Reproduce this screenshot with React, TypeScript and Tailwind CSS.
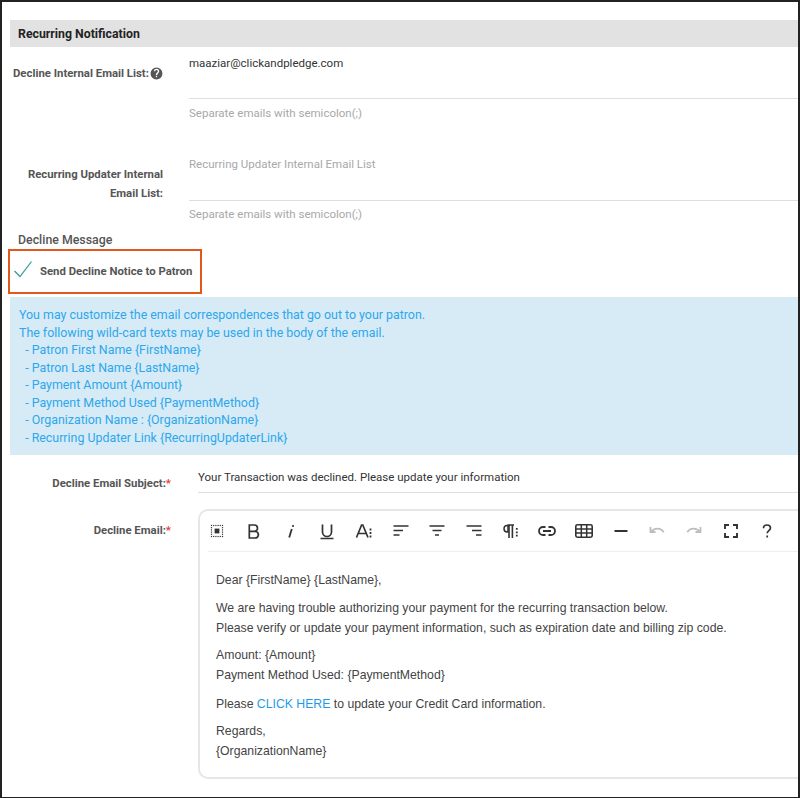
import React from "react";
const Ic = ({ children, c = "#333" }: { children: React.ReactNode; c?: string }) => (
  <div className="w-[36.67px] h-[40px] flex items-center justify-center shrink-0">
    <svg width="24" height="24" viewBox="0 0 24 24" fill="none" stroke={c} strokeWidth="1.6" strokeLinecap="butt">{children}</svg>
  </div>
);

function Toolbar() {
  const dots: [number, number][] = [];
  for (let i = 0; i < 6; i++) {
    const p = 6.5 + i * 2.2;
    dots.push([p, 6.5], [p, 17.5]);
    if (i > 0 && i < 5) dots.push([6.5, p], [17.5, p]);
  }
  return (
    <div className="flex -ml-px">
      <Ic>
        {dots.map(([x, y]) => (
          <rect key={`${x}-${y}`} x={x - 0.6} y={y - 0.6} width="1.2" height="1.2" fill="#333" stroke="none" />
        ))}
        <rect x="9.6" y="9.6" width="4.8" height="4.8" fill="#333" stroke="none" />
      </Ic>
      <Ic>
        <path d="M7.3 6h5a3.2 3.2 0 0 1 0 6.4h-5zM7.3 12.4h5.8a3.3 3.3 0 0 1 0 6.6H7.3z" strokeWidth="1.7" />
      </Ic>
      <Ic>
        <path d="M13.2 7h1.6M12.8 10l-2.6 8.5" strokeWidth="1.8" />
      </Ic>
      <Ic>
        <path d="M7.5 5.5v7.5a4.5 4.5 0 0 0 9 0V5.5M5.5 19.5h13" strokeWidth="1.7" />
      </Ic>
      <Ic>
        <path d="M4.5 18.5 9.6 6h1.2L16 18.5M6.3 14.5h8.4" strokeWidth="1.7" />
        <path d="M18.5 9.5v2M18.5 13v2M18.5 16.5v2" strokeWidth="1.8" />
      </Ic>
      <Ic>
        <path d="M4.5 7h15M4.5 11.5h9.5M4.5 16h6" strokeWidth="1.7" />
      </Ic>
      <Ic>
        <path d="M4.5 7h15M7.5 11.5h9M10 16h4" strokeWidth="1.7" />
      </Ic>
      <Ic>
        <path d="M4.5 7h15M10 11.5h9.5M14 16h5.5" strokeWidth="1.7" />
      </Ic>
      <Ic>
        <path d="M9 6.6H8.2a3.2 3.2 0 0 0 0 6.4H9z" strokeWidth="1.5" />
        <path d="M8.6 6h6.4M10 6v13M13.4 6v13" strokeWidth="1.6" />
        <path d="M17.8 9v1.8M17.8 12.4v1.8M17.8 15.8v1.8" strokeWidth="1.8" />
      </Ic>
      <Ic>
        <path d="M10.5 8H8a4 4 0 0 0 0 8h2.5M13.5 8H16a4 4 0 0 1 0 8h-2.5M8 12h8" strokeWidth="1.8" />
      </Ic>
      <Ic>
        <rect x="3.8" y="5.8" width="16.4" height="12.4" rx="1.6" strokeWidth="1.6" />
        <path d="M3.8 10h16.4M3.8 14h16.4M9.3 5.8v12.4M14.7 5.8v12.4" strokeWidth="1.5" />
      </Ic>
      <Ic>
        <path d="M5.5 12h13" strokeWidth="2" />
      </Ic>
      <Ic c="#bdbdbd">
        <path d="M5.5 8v5h5" strokeWidth="1.8" />
        <path d="M5.7 12.8C8 10.2 10.3 9.6 12.5 9.6c2.7 0 4.8 1.3 6.2 3.6" strokeWidth="1.8" />
      </Ic>
      <Ic c="#bdbdbd">
        <path d="M18.5 8v5h-5" strokeWidth="1.8" />
        <path d="M18.3 12.8C16 10.2 13.7 9.6 11.5 9.6c-2.7 0-4.8 1.3-6.2 3.6" strokeWidth="1.8" />
      </Ic>
      <Ic>
        <path d="M6 10V6h4M14 6h4v4M18 14v4h-4M10 18H6v-4" strokeWidth="1.9" />
      </Ic>
      <Ic>
        <path d="M8.5 9.2c0-2 1.6-3.2 3.5-3.2s3.5 1.2 3.5 3c0 2.6-3.3 2.7-3.3 5.3M12.2 16.6v2" strokeWidth="1.7" />
      </Ic>
    </div>
  );
}

const blue = [
  "You may customize the email correspondences that go out to your patron.",
  "The following wild-card texts may be used in the body of the email.",
  "\u00a0\u00a0- Patron First Name {FirstName}",
  "\u00a0\u00a0- Patron Last Name {LastName}",
  "\u00a0\u00a0- Payment Amount {Amount}",
  "\u00a0\u00a0- Payment Method Used {PaymentMethod}",
  "\u00a0\u00a0- Organization Name : {OrganizationName}",
  "\u00a0\u00a0- Recurring Updater Link {RecurringUpdaterLink}",
];

export default function App() {
  return (
    <div className="w-[800px] h-[798px] overflow-hidden bg-white border-t-2 border-l-2 border-r-2 border-b border-[#222] pl-2 pt-[18px] font-['Roboto',sans-serif] flex flex-col">
      <div className="h-[27px] shrink-0 bg-[#e2e2e2] pl-2 pt-px flex items-center text-[12.3px] font-bold text-[#222]">Recurring Notification</div>

      <div className="flex h-[101px] shrink-0">
        <div className="w-[179px] shrink-0 pl-[3px] pt-[18px] flex items-center self-start text-[11.35px] leading-4 font-bold text-[#555]">
          <span className="whitespace-nowrap">Decline Internal Email List:</span>
          <svg width="13" height="13" viewBox="0 0 24 24" className="ml-[1px]">
            <path fill="#555" d="M12 1a11 11 0 1 0 0 22 11 11 0 0 0 0-22zm1.2 18h-2.5v-2.5h2.5V19zm2.7-8.2-1.1 1.1c-.9.9-1.5 1.7-1.5 3.1h-2.5v-.6c0-1.2.5-2.3 1.4-3.2l1.5-1.5c.5-.4.7-1 .7-1.7a2.4 2.4 0 0 0-4.8 0H7.2a4.9 4.9 0 0 1 9.8 0c0 1.1-.5 2.1-1.1 2.8z" />
          </svg>
        </div>
        <div className="flex-1 min-w-0">
          <div className="h-[52px] border-b border-[#dedede] pt-2 text-[11.5px] leading-4 text-[#333]">maaziar@clickandpledge.com</div>
          <div className="mt-[6px] text-[11.5px] leading-4 text-[#a8a8a8]">Separate emails with semicolon(;)</div>
        </div>
      </div>

      <div className="flex shrink-0">
        <div className="w-[179px] shrink-0 pr-[26px] pt-[17px] text-right text-[11.35px] leading-[19px] font-bold text-[#555]">
          Recurring Updater Internal<br />Email List:
        </div>
        <div className="flex-1 min-w-0">
          <div className="h-[53px] border-b border-[#dedede] pt-2 text-[11.5px] leading-4 text-[#a8a8a8]">Recurring Updater Internal Email List</div>
          <div className="mt-[5px] text-[11.5px] leading-4 text-[#a8a8a8]">Separate emails with semicolon(;)</div>
        </div>
      </div>

      <div className="mt-[9px] h-[18px] pl-2 text-[12.35px] leading-[18px] font-medium text-[#555] shrink-0">Decline Message</div>

      <div className="-ml-[2px] w-[194px] h-[45px] shrink-0 border-2 border-[#e2571e] flex items-center">
        <svg width="20" height="18" viewBox="0 0 20 18" className="ml-[3px] -mt-[6px] shrink-0" fill="none" stroke="#2b9c8f" strokeWidth="1.2">
          <path d="M1.5 11 7 16.5 18.5 1.5" />
        </svg>
        <span className="ml-[7px] text-[11.35px] font-bold text-[#555] whitespace-nowrap">Send Decline Notice to Patron</span>
      </div>

      <div className="mt-[3px] h-[158px] shrink-0 bg-[#d6ebf5] pl-[9px] py-[9px] text-[12.4px] leading-[17.5px] text-[#2ea7ee]">
        {blue.map((t) => (<div key={t}>{t}</div>))}
      </div>

      <div className="mt-[14px] flex shrink-0 h-[24px]">
        <div className="w-[188px] shrink-0 pr-[27px] pt-[6px] text-right text-[11.35px] leading-4 font-bold text-[#555]">
          Decline Email Subject:<span className="text-[#e53935]">*</span>
        </div>
        <div className="flex-1 border-b border-[#dedede] text-[11.5px] leading-4 text-[#333]">Your Transaction was declined. Please update your information</div>
      </div>

      <div className="mt-[16px] flex shrink-0">
        <div className="w-[188px] shrink-0 pr-[27px] pt-[13px] text-right text-[11.35px] leading-4 font-bold text-[#555]">
          Decline Email:<span className="text-[#e53935]">*</span>
        </div>
        <div className="flex-1 h-[270px] border-2 border-r-0 border-[#e6e6e6] rounded-l-[10px] font-['Liberation_Sans',sans-serif] text-[12.25px] leading-5 text-[#444]">
          <Toolbar />
          <div className="ml-2 h-px bg-[#eeeeee]" />
          <div className="pl-4 pt-[18px]">
            <p>Dear {"{FirstName}"} {"{LastName}"},</p>
            <p className="mt-2">We are having trouble authorizing your payment for the recurring transaction below.<br />Please verify or update your payment information, such as expiration date and billing zip code.</p>
            <p className="mt-[7px]">Amount: {"{Amount}"}<br />Payment Method Used: {"{PaymentMethod}"}</p>
            <p className="mt-[9px]">Please <span className="text-[#1e9be8]">CLICK HERE</span> to update your Credit Card information.</p>
            <p className="mt-[7px]">Regards,<br />{"{OrganizationName}"}</p>
          </div>
        </div>
      </div>
    </div>
  );
}
